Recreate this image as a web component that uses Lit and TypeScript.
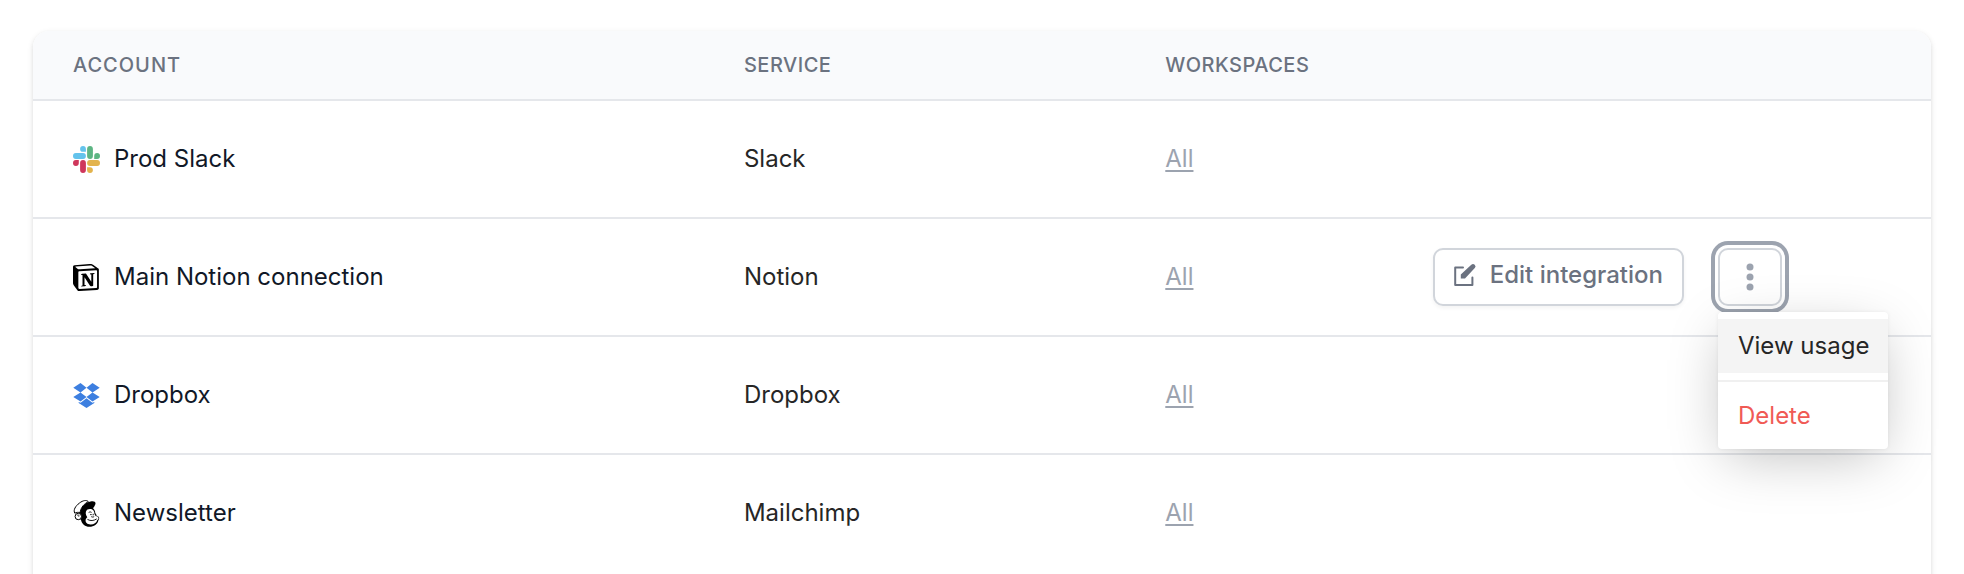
import { LitElement, html, css, svg } from "lit";
import { customElement } from "lit/decorators.js";

const slackIcon = svg`<svg class="logo" viewBox="0 0 27 27" aria-hidden="true">
  <path fill="#63c3ec" d="M10 0a2.9 2.9 0 0 1 2.9 2.9V5.8H10A2.9 2.9 0 0 1 10 0zM2.9 7.1H10a2.9 2.9 0 0 1 0 5.8H2.9a2.9 2.9 0 0 1 0-5.8z"/>
  <path fill="#5db583" d="M27 10a2.9 2.9 0 0 1-2.9 2.9h-2.9V10A2.9 2.9 0 0 1 27 10zM19.9 2.9V10a2.9 2.9 0 0 1-5.8 0V2.9a2.9 2.9 0 0 1 5.8 0z"/>
  <path fill="#e3b34c" d="M17 27a2.9 2.9 0 0 1-2.9-2.9v-2.9H17a2.9 2.9 0 0 1 0 5.8zM24.1 19.9H17a2.9 2.9 0 0 1 0-5.8h7.1a2.9 2.9 0 0 1 0 5.8z"/>
  <path fill="#cf375c" d="M0 17a2.9 2.9 0 0 1 2.9-2.9h2.9V17A2.9 2.9 0 0 1 0 17zM7.1 24.1V17a2.9 2.9 0 0 1 5.8 0v7.1a2.9 2.9 0 0 1-5.8 0z"/>
</svg>`;

const notionIcon = svg`<svg class="logo" viewBox="0 0 100 100" aria-hidden="true">
  <path fill="#fff" d="M6 4.3 61.400 .2c6.800-.6 8.600-.2 12.900 2.900l17.700 12.500c2.900 2.100 3.900 2.700 3.900 5v68.500c0 4.300-1.600 6.800-7 7.200L24.500 100c-4.100.2-6-.4-8.200-3.100L3.300 80c-2.300-3.100-3.300-5.400-3.300-8.200V11C0 7.500 1.600 4.700 6 4.300z"/>
  <path fill="#000" fill-rule="evenodd" d="M61.400.2 6 4.300C1.600 4.700 0 7.600 0 11v60.700c0 2.700 1 5 3.300 8.200l13 16.900c2.100 2.700 4.100 3.300 8.200 3.100l64.300-3.900c5.400-.4 7-2.900 7-7.200V20.600c0-2.200-.9-2.900-3.500-4.800L74.200 3.100C69.900 0 68.200-.4 61.400.2zM25.900 19.500c-5.200.4-6.400.4-9.400-2L8.900 11.500c-.8-.8-.4-1.700 1.500-1.900l53.300-3.900c4.500-.4 6.800 1.200 8.500 2.500l9.100 6.600c.4.2 1.400 1.400.2 1.400l-55 3.300zM19.800 88.300V30.400c0-2.500.8-3.700 3.100-3.900L86 22.800c2.100-.2 3.100 1.200 3.100 3.700v57.500c0 2.500-.4 4.700-3.900 4.900l-60.400 3.500c-3.500.2-5-1-5-4.100zm59.600-54.800c.4 1.700 0 3.500-1.700 3.700l-2.900.6v42.700c-2.500 1.400-4.900 2.100-6.800 2.100-3.200 0-4-1-6.300-4L42.600 48.700v29l6 1.400s0 3.500-4.900 3.500l-13.400.8c-.4-.8 0-2.700 1.400-3.100l3.500-1V40.900l-4.900-.4c-.4-1.800.6-4.300 3.300-4.500l14.400-1 19.800 30.300V38.500l-5.100-.6c-.4-2.100 1.200-3.700 3.100-3.900z"/>
</svg>`;

const dropboxIcon = svg`<svg class="logo" viewBox="0 0 27 27" aria-hidden="true">
  <path fill="#3d7fe0" d="M7.500 1 0.300 5.800 7.500 10.400 13.500 5.800zM19.500 1 13.500 5.800 19.500 10.400 26.700 5.800zM7.500 10.400 0.300 15 7.500 19.600 13.500 15zM19.500 10.400 13.500 15 19.500 19.600 26.700 15zM13.500 16.200 7.600 20.700 5.700 20 V21 L13.500 26 21.300 21V20L19.400 20.700z"/>
</svg>`;

const mailchimpIcon = svg`<svg class="logo" viewBox="0 0 27 27" aria-hidden="true">
  <path fill="#000" d="M7 12.500C8 6.500 12.500 2 18.500 1.200c2.500-.3 4 .4 4 1.900 0 1.200-.5 2.400-1.200 3.300L20 8.200c1.500 1.300 2.200 3 2.300 5 .8.600 1.200 1.400 1 2.300 1.500.4 2.900 1.300 2.900 2.600 0 1-.3 1.600-.8 2.100-.8 4-4.400 6.500-9 6.500-4.300 0-7.300-2.400-8.300-6.500L6.500 18z"/>
  <path fill="#fff" stroke="#000" stroke-width="1" d="M1.800 13.200C0 10 2.500 6 6.500 3 10 .3 13.500-.2 15.300 1.600 11.500 3.600 8 7 6.900 12.700c-1.600-.6-3.400-.4-5.100.5z"/>
  <circle cx="5.300" cy="16.500" r="3.200" fill="#fff" stroke="#000" stroke-width="1"/>
  <path fill="none" stroke="#000" stroke-width=".8" d="M4.200 15.200c1.700-.7 2.300.5 1.500 1.500"/>
  <path fill="#fff" d="M14 9.800c2.400-1.500 5.500-1.100 6.600 1 .8 1.300.8 2.500.9 3.500.8.500 1.100 1 .8 1.800 1.700.2 3.100.8 3.200 1.800.1 1-.5 1.600-1.200 2-.8 3.100-3.700 4.700-6.900 4.500-3.200-.2-5.100-2-4.800-4.500.2-1.200.9-2 1.700-2.700-1.900-2.200-2.200-5.500-.3-7.400z"/>
  <path fill="none" stroke="#000" stroke-width=".9" stroke-linecap="round" d="M14.800 19.600c2.800 1.600 5.800 1.200 8.600-.5M16 12.300c.8-.5 1.500-.5 2.200-.1M17.500 14.600h.8M20.200 14.200v.8M20.800 16.800c-.8.400-1.500.3-2.200 0"/>
</svg>`;

const editIcon = svg`<svg class="edit-icon" viewBox="0 0 22 22" aria-hidden="true">
  <path fill="none" stroke="currentColor" stroke-width="2" stroke-linejoin="round" stroke-linecap="round" d="M9 3.600H1.200V21h17.200v-7.500"/>
  <path fill="currentColor" d="M17.300.8a2.400 2.400 0 0 1 3.500 3.300L11 14.600H6.800v-4z"/>
</svg>`;

const dotsIcon = svg`<svg class="dots-icon" viewBox="0 0 8 28" aria-hidden="true" fill="currentColor">
  <circle cx="4" cy="4" r="3.500"/><circle cx="4" cy="14" r="3.500"/><circle cx="4" cy="24" r="3.500"/>
</svg>`;

const rows = [
  { account: "Prod Slack", service: "Slack", icon: slackIcon },
  { account: "Main Notion connection", service: "Notion", icon: notionIcon, open: true },
  { account: "Dropbox", service: "Dropbox", icon: dropboxIcon },
  { account: "Newsletter", service: "Mailchimp", icon: mailchimpIcon },
];

@customElement("app-root")
export class AppRoot extends LitElement {
  static styles = css`
    :host {
      display: block;
      height: 100vh;
      overflow: hidden;
      box-sizing: border-box;
      padding: 31px 33px 0;
      background: #fff;
      color: #262626;
      font: 24px/32px Inter, sans-serif;
    }
    .card {
      min-height: 100vh;
      border-radius: 16px;
      background: #fff;
      box-shadow: 0 2px 6px rgba(0, 0, 0, 0.1), 0 2px 4px rgba(0, 0, 0, 0.06);
    }
    .table { width: 100%; table-layout: fixed; border-collapse: separate; border-spacing: 0; }
    .account-col { width: 35.35%; }
    .service-col { width: 22.2%; }
    .space-col { width: 14.1%; }
    th, td { padding: 0 40px; text-align: left; font-weight: 400; border-bottom: 2px solid #e5e7eb; }
    th {
      height: 68px;
      background: #f9fafc;
      color: #6b7280;
      font-size: 20px;
      font-weight: 500;
      text-transform: uppercase;
      letter-spacing: 0.025em;
    }
    th:first-child { border-top-left-radius: 16px; letter-spacing: 0.05em; }
    th:last-child { border-top-right-radius: 16px; }
    td { height: 116px; }
    tr:last-child td { border-bottom: 0; }
    td.action-cell { padding: 0 149px 0 0; }
    .account { display: flex; align-items: center; gap: 14px; color: #111827; }
    .logo { width: 27px; height: 27px; flex: none; overflow: visible; }
    .all { color: #9ca3af; text-decoration: underline; text-underline-offset: 3px; text-decoration-thickness: 2px; }
    .actions { display: flex; justify-content: flex-end; gap: 34px; }
    button { font: inherit; margin: 0; cursor: pointer; box-sizing: border-box; }
    .edit, .more {
      height: 58px;
      border: 2px solid #d1d5db;
      border-radius: 10px;
      background: #fff;
      box-shadow: 0 2px 4px rgba(0, 0, 0, 0.05);
    }
    .edit { display: flex; align-items: center; gap: 14px; padding: 0 19px 4px; color: #6b7280; font-weight: 500; }
    .edit-icon { width: 22px; height: 22px; overflow: visible; }
    .menu-anchor { position: relative; }
    .more {
      display: flex;
      align-items: center;
      justify-content: center;
      width: 64px;
      padding: 0;
      color: #9ca3af;
      box-shadow: 0 0 0 3px #fff, 0 0 0 7px #9ca3af;
    }
    .dots-icon { width: 8px; height: 28px; }
    .menu {
      position: absolute;
      z-index: 1;
      top: 64px;
      left: 0;
      width: 170px;
      box-sizing: border-box;
      padding: 7px 0 6px;
      border-radius: 4px;
      background: #fff;
      box-shadow: 0 14px 56px -8px rgba(0, 0, 0, 0.26), 0 0 4px rgba(0, 0, 0, 0.06);
    }
    .item { display: block; width: 100%; height: 54px; padding: 0 20px; border: 0; background: none; color: #262626; text-align: left; white-space: nowrap; }
    .item.active { background: #f4f4f4; }
    .item.danger { color: #f05a55; }
    .divider { height: 2px; margin: 7px 0; border: 0; background: #f0f0f0; }
  `;

  render() {
    return html`<main class="card">
      <table class="table">
        <colgroup>
          <col class="account-col" /><col class="service-col" /><col class="space-col" /><col />
        </colgroup>
        <thead>
          <tr><th scope="col">Account</th><th scope="col">Service</th><th scope="col">Workspaces</th><th></th></tr>
        </thead>
        <tbody>
          ${rows.map((row) => html`<tr>
            <td><div class="account">${row.icon}<span>${row.account}</span></div></td>
            <td>${row.service}</td>
            <td><a class="all" href="#">All</a></td>
            <td class="action-cell">${row.open ? this.renderActions() : null}</td>
          </tr>`)}
        </tbody>
      </table>
    </main>`;
  }

  private renderActions() {
    return html`<div class="actions">
      <button class="edit" type="button">${editIcon}<span>Edit integration</span></button>
      <div class="menu-anchor">
        <button class="more" type="button" aria-label="More actions" aria-haspopup="menu" aria-expanded="true">${dotsIcon}</button>
        <div class="menu" role="menu">
          <button class="item active" type="button" role="menuitem">View usage</button>
          <hr class="divider" />
          <button class="item danger" type="button" role="menuitem">Delete</button>
        </div>
      </div>
    </div>`;
  }
}
